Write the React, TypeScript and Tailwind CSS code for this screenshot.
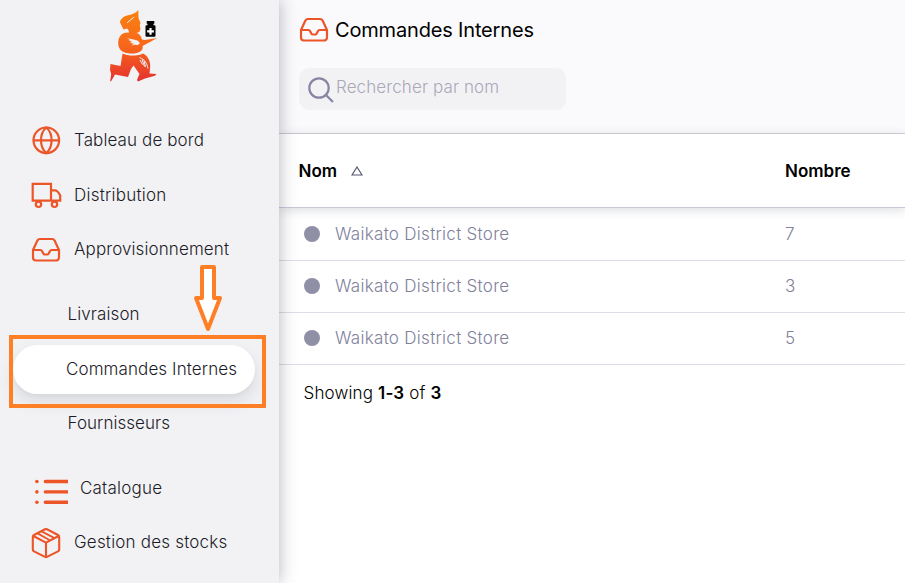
import type { ReactNode } from 'react';

const ink = '#eb5527';

function GlobeIcon() {
  return (
    <svg width="30" height="30" viewBox="0 0 30 30" fill="none" stroke={ink} strokeWidth="2.200">
      <circle cx="15.300" cy="15.300" r="12.800" />
      <path d="M2.500 15.300h25.600M15.300 2.500c-3.800 3.200-5.300 8-5.300 12.800s1.500 9.600 5.300 12.800c3.800-3.200 5.300-8 5.300-12.800s-1.500-9.600-5.300-12.800z" />
    </svg>
  );
}

function TruckIcon() {
  return (
    <svg width="32" height="28" viewBox="0 0 32 28" fill="none" stroke={ink} strokeWidth="2.200">
      <path d="M1.700 2.800H20v16.800H1.700zM20 9.300h4q2.500 0 5.200 5v5.300H20" />
      <circle cx="7.500" cy="23.300" r="2.700" />
      <circle cx="23.500" cy="23.300" r="2.700" />
    </svg>
  );
}

function InboxIcon() {
  return (
    <svg width="30" height="26" viewBox="0 0 30 26" fill="none" stroke={ink} strokeWidth="2.200" strokeLinejoin="round">
      <path d="M2 13 6.300 3.700A3 3 0 0 1 9 2h12a3 3 0 0 1 2.700 1.700L28 13v7.500a3 3 0 0 1-3 3H5a3 3 0 0 1-3-3zh7.500q1 0 1.500 1l1.300 2.500q.5 1 1.500 1h2.400q1 0 1.500-1L19 14q.5-1 1.500-1H28" />
    </svg>
  );
}

function ListIcon() {
  return (
    <svg width="34" height="26" viewBox="0 0 34 26" fill={ink}>
      <circle cx="1.900" cy="2.500" r="1.800" />
      <circle cx="1.900" cy="12.900" r="1.800" />
      <circle cx="1.900" cy="23.300" r="1.800" />
      <path d="M10.300.8H33v3.400H10.300a1.700 1.700 0 0 1 0-3.400zM10.300 11.200H33v3.400H10.300a1.700 1.700 0 0 1 0-3.400zM10.300 21.600H33V25H10.300a1.700 1.700 0 0 1 0-3.400z" />
    </svg>
  );
}

function BoxIcon() {
  return (
    <svg width="30" height="32" viewBox="0 0 30 32" fill="none" stroke={ink} strokeWidth="2.100" strokeLinejoin="round">
      <path d="M14 2.300a2.200 2.200 0 0 1 2 0L27 8q1.200.7 1.200 2v12.500q0 1.300-1.200 1.900l-11 5.500a2.200 2.200 0 0 1-2 0L3 24.400q-1.200-.6-1.200-1.900V10Q1.800 8.700 3 8zM2.300 9 15 15.600 27.700 9M15 15.600V30" />
      <path strokeWidth="1.800" d="M6.600 6.400 18.800 13.200M10.600 4.400 23 10.900" />
    </svg>
  );
}

function CourierLogo() {
  return (
    <svg width="50" height="74" viewBox="0 0 50 74">
      <defs>
        <linearGradient id="courier" gradientUnits="userSpaceOnUse" x1="0" y1="0" x2="0" y2="73">
          <stop offset="0" stopColor="#f98310" />
          <stop offset=".5" stopColor="#f8671a" />
          <stop offset="1" stopColor="#e4312f" />
        </linearGradient>
      </defs>
      <g fill="url(#courier)">
        <path d="M29.300 1 C27 4 23 5.500 18 6.500 C14 7.500 12 10 10.800 13 L14.500 20.500 L18 19.500 L19.500 21 L20 23.500 C14 23 10.500 26 9.500 31 C8.500 37 10.500 41 14.500 43 C20 45 27 45.500 32 42 C34 40 34 38.500 33.500 37 L39.500 33.800 L42 32.500 L48 29 L36 31 L33 30.500 C32 27 30.500 24.500 27.500 24 L30.300 23 L31.500 20 L30.800 16 L31.500 14 L29.500 9 Z" />
        <path d="M13.500 44.500 C19 47 28 47.500 34 44.500 C39 47 41.500 52 41.200 58 L40.500 64.500 L47.500 65 L46 66.800 L36 69.500 L29 72.500 L28 71 L29.500 67 L30.500 65 L24.500 56.500 L22 60 L19 68 L6 65.500 L4 69 L2 72.500 L1.200 72 L2.200 65 L1 61 L1.500 55 L11.500 57 Z" />
      </g>
      <path fill="none" stroke="#f2f2f5" strokeWidth="1" strokeLinecap="round" d="m18.500 13.500 6-5" />
      <path fill="#f2f2f5" d="m18 29.300 5.500 1 5 1.200 2.500 2.500-2 2-3.500-.2-3 .6 2.300-1.800-4-.5 2.500-1.300-3.800-1 2-.6z" />
      <path fill="none" stroke="#f2f2f5" strokeWidth="1" d="M13 43.500c7 3 13 3 19.500-.5M30.500 48.500c5.500 2 7.500 6 8.500 11M31 51l2.500 4.500M33 50.500l2.500 7M35 51.500l1.500 6.500" />
      <path fill="#050505" d="M37.700 12h7.600v2.800h-7.600zM38.500 14.800h6v1.600h-6zM37.500 16.300h8a1 1 0 0 1 1 1v9.400a1 1 0 0 1-1 1h-8a1 1 0 0 1-1-1v-9.400a1 1 0 0 1 1-1z" />
      <path stroke="#fff" strokeWidth="2.200" d="M41.500 19v6.800M38.100 22.400h6.800" />
    </svg>
  );
}

function NavRow({ icon, label, text }: { icon: ReactNode; label: string; text: string }) {
  return (
    <li className="flex h-[54.400px] items-center pl-[31px]">
      {icon}
      <span className={text}>{label}</span>
    </li>
  );
}

const rows = [
  { name: 'Waikato District Store', count: 7 },
  { name: 'Waikato District Store', count: 3 },
  { name: 'Waikato District Store', count: 5 },
];

export default function App() {
  return (
    <div className="relative flex h-[583px] w-[905px] overflow-hidden bg-white font-['Inter',sans-serif] text-[17px] leading-6 text-[#1c1c28]">
      <aside className="relative z-10 w-[279px] shrink-0 bg-[#f2f2f5] font-light tracking-[0.100px] shadow-[0_0_16px_rgba(40,41,61,0.350)]">
        <div className="h-[113px] pt-[9px] pl-[109px]">
          <CourierLogo />
        </div>
        <nav>
          <ul>
            <NavRow icon={<GlobeIcon />} label="Tableau de bord" text="ml-[13px]" />
            <NavRow icon={<TruckIcon />} label="Distribution" text="ml-[11px] tracking-[0.230px]" />
            <NavRow icon={<span className="pt-[2px]"><InboxIcon /></span>} label="Approvisionnement" text="ml-[13px]" />
          </ul>
          <ul className="my-[10.400px]">
            <li className="flex h-[54.400px] items-center pl-[67.500px]">Livraison</li>
            <li className="flex h-[54.400px] items-center pt-[2px] pl-[13px]">
              <span className="flex h-[49px] w-[242px] items-center rounded-full bg-white pl-[53px] shadow-[0_8px_16px_rgba(96,97,112,0.160),0_2px_4px_rgba(40,41,61,0.040)]">
                Commandes Internes
              </span>
            </li>
            <li className="flex h-[54.400px] items-center pl-[67.500px] tracking-[0.050px]">Fournisseurs</li>
          </ul>
          <ul>
            <li className="flex h-[54.400px] items-center pt-[1px] pl-[35px]">
              <span className="pt-[8px]"><ListIcon /></span>
              <span className="ml-[11px] tracking-[0.200px]">Catalogue</span>
            </li>
            <NavRow icon={<span className="pt-[2px]"><BoxIcon /></span>} label="Gestion des stocks" text="ml-[13px] tracking-[0.200px]" />
          </ul>
        </nav>
      </aside>

      <main className="min-w-0 flex-1">
        <header className="h-[134px] border-b border-[#d0d0d8] bg-[#fafafc] pt-[17px] pl-[20px]">
          <h1 className="flex h-[26px] items-center text-[20px] font-normal tracking-[-0.170px] text-black">
            <InboxIcon />
            <span className="ml-[6px]">Commandes Internes</span>
          </h1>
          <label className="mt-[25px] flex h-[42px] w-[267px] items-center rounded-[10px] bg-[#f2f2f5] pl-[9px] font-light tracking-[0.100px] text-[#a9a9b8]">
            <svg className="mt-[1px]" width="26" height="26" viewBox="0 0 26 26" fill="none" stroke="#8686a3" strokeWidth="2.200">
              <circle cx="11" cy="11" r="9.700" />
              <path d="m18 18 7 7" />
            </svg>
            <span className="ml-[2px] pb-[5px]">Rechercher par nom</span>
          </label>
        </header>

        <div className="relative flex h-[74px] items-center border-b border-[#c7c9d9] bg-white pl-[19.500px] font-semibold text-black shadow-[0_2px_10px_rgba(40,41,61,0.160)]">
          <span className="flex w-[486.500px] items-center">
            Nom
            <svg className="mt-[1px] ml-[13.500px]" width="12" height="10" viewBox="0 0 12 10" fill="none" stroke="#555770" strokeWidth="1.200">
              <path d="M6 1 11 9H1z" />
            </svg>
          </span>
          <span>Nombre</span>
        </div>
        <ul className="font-light text-[#80819a]">
          {rows.map((row, index) => (
            <li key={index} className="flex h-[52px] items-center border-b border-[#dddde5] pb-[2px] pl-[25px] first:h-[53px] first:pb-0">
              <span className="h-[16px] w-[16px] rounded-full bg-[#8f90a6]" />
              <span className="ml-[15px] w-[450px] tracking-[0.290px]">{row.name}</span>
              <span>{row.count}</span>
            </li>
          ))}
        </ul>
        <p className="pt-[16px] pl-[24.500px] font-light tracking-[0.150px] text-black">
          Showing <b className="font-semibold">1-3</b> of <b className="font-semibold">3</b>
        </p>
      </main>

      <div className="absolute top-[335px] left-[9px] z-20 h-[73px] w-[257px] border-[4px] border-[#ff7f27]" />
      <svg className="absolute top-[264px] left-[192px] z-20" width="32" height="70" viewBox="0 0 32 70" fill="#fff" stroke="#ff7f27" strokeWidth="4" strokeLinejoin="round">
        <path d="M10 3h12v31h6L16 65 4 34h6z" />
      </svg>
    </div>
  );
}
